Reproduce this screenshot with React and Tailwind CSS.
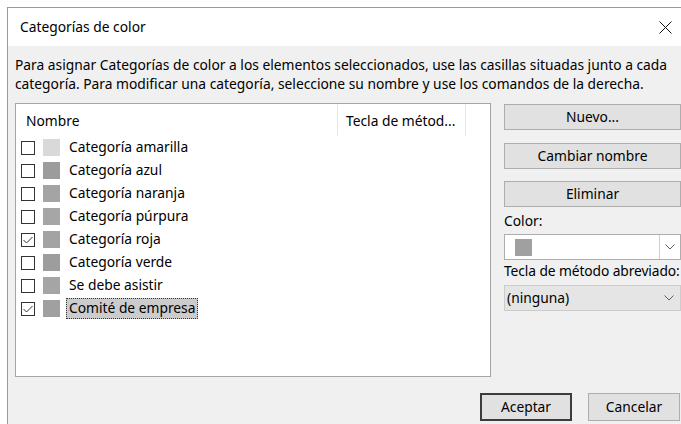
import { useState } from "react"

const categories = [
  { name: "Categoría amarilla", color: "#d9d9d9", checked: false },
  { name: "Categoría azul", color: "#9c9c9c", checked: false },
  { name: "Categoría naranja", color: "#a4a4a4", checked: false },
  { name: "Categoría púrpura", color: "#a6a6a6", checked: false },
  { name: "Categoría roja", color: "#a3a3a3", checked: true },
  { name: "Categoría verde", color: "#9d9d9d", checked: false },
  { name: "Se debe asistir", color: "#a5a5a5", checked: false },
  { name: "Comité de empresa", color: "#a0a0a0", checked: true },
]

const Checkbox = ({ checked, onClick }) => (
  <div
    onClick={onClick}
    className="w-[14px] h-[14px] border border-[#333333] bg-white flex items-center justify-center shrink-0"
  >
    {checked && (
      <svg width="12" height="12" viewBox="0 0 12 12">
        <polyline points="1.5,6 4.5,9 10.5,3" fill="none" stroke="#333333" strokeWidth="1" />
      </svg>
    )}
  </div>
)

const Chevron = () => (
  <svg width="10" height="6" viewBox="0 0 10 6">
    <polyline points="0.5,0.5 5,5 9.5,0.5" fill="none" stroke="#606060" strokeWidth="1" />
  </svg>
)

const WinButton = ({ children, primary, className = "" }) => (
  <button
    className={`h-[26px] bg-[#e1e1e1] text-[13.8px] text-black flex items-center justify-center ${
      primary ? "border-2 border-[#3c3c3c]" : "border border-[#adadad]"
    } ${className}`}
  >
    {children}
  </button>
)

export default function App() {
  const [items, setItems] = useState(categories)
  const [selected, setSelected] = useState(7)

  const toggle = (i) =>
    setItems(items.map((it, idx) => (idx === i ? { ...it, checked: !it.checked } : it)))

  return (
    <div
      className="w-[681px] h-[424px] overflow-hidden bg-white pt-[7px] pl-[7px]"
      style={{ fontFamily: '"Noto Sans", "Open Sans", sans-serif' }}
    >
      <div className="w-[690px] h-[430px] border-l border-t border-[#9a9a9a] bg-[#f0f0f0] flex flex-col">
        {/* title bar */}
        <div className="h-[38px] bg-white flex items-center justify-between pl-[12px] pr-[25px] shrink-0">
          <span className="text-[13.8px] text-black pt-[1px]">Categorías de color</span>
          <svg width="13" height="13" viewBox="0 0 13 13">
            <line x1="0.5" y1="0.5" x2="12.5" y2="12.5" stroke="#111" strokeWidth="1" />
            <line x1="12.5" y1="0.5" x2="0.5" y2="12.5" stroke="#111" strokeWidth="1" />
          </svg>
        </div>

        {/* body */}
        <div className="pl-[7px] pt-[9px]">
          <div className="text-[13.8px] leading-[19px] text-black w-[674px] whitespace-nowrap">
            <div>Para asignar Categorías de color a los elementos seleccionados, use las casillas situadas junto a cada</div>
            <div>categoría. Para modificar una categoría, seleccione su nombre y use los comandos de la derecha.</div>
          </div>

          <div className="flex mt-[10px]">
            {/* category list */}
            <div className="w-[476px] h-[274px] border border-[#a5a5a5] bg-white flex flex-col shrink-0">
              <div className="h-[32px] flex text-[13.8px] text-black shrink-0">
                <div className="w-[322px] border-r border-[#e5e5e5] pl-[10px] pt-[7px]">Nombre</div>
                <div className="w-[128px] border-r border-[#e5e5e5] pl-[8px] pt-[7px] whitespace-nowrap overflow-hidden">
                  Tecla de métod...
                </div>
              </div>
              {items.map((it, i) => (
                <div key={it.name} className="h-[23px] flex items-center pl-[5px] text-[13.8px] text-black">
                  <Checkbox checked={it.checked} onClick={() => toggle(i)} />
                  <div className="w-[17px] h-[17px] ml-[8px] shrink-0" style={{ backgroundColor: it.color }} />
                  <span
                    onClick={() => setSelected(i)}
                    className={`ml-[6px] h-[21px] px-[2px] flex items-center border ${
                      selected === i ? "bg-[#cccccc] border-dotted border-[#333333]" : "border-transparent"
                    }`}
                  >
                    {it.name}
                  </span>
                </div>
              ))}
            </div>

            {/* commands */}
            <div className="ml-[13px] w-[177px] flex flex-col text-[13.8px] text-black">
              <WinButton className="mt-[1px]">Nuevo...</WinButton>
              <WinButton className="mt-[13px]">Cambiar nombre</WinButton>
              <WinButton className="mt-[12px]">Eliminar</WinButton>
              <div className="mt-[5px] leading-[18px]">Color:</div>
              <div className="mt-[4px] h-[26px] bg-white border border-[#adadad] flex items-center">
                <div className="w-[17px] h-[17px] ml-[10px] bg-[#a0a0a0]" />
                <div className="ml-auto h-full w-[21px] border-l border-[#d0d0d0] flex items-center justify-center">
                  <Chevron />
                </div>
              </div>
              <div className="mt-[2px] leading-[18px] whitespace-nowrap tracking-[-0.1px]">Tecla de método abreviado:</div>
              <div className="mt-[5px] h-[26px] bg-[#e5e5e5] border border-[#cccccc] flex items-center pl-[2px] pr-[6px]">
                <span>(ninguna)</span>
                <span className="ml-auto">
                  <Chevron />
                </span>
              </div>
            </div>
          </div>

          {/* footer buttons */}
          <div className="flex mt-[16px] w-[665px] justify-end gap-[16px]">
            <WinButton primary className="w-[92px] h-[28px]">Aceptar</WinButton>
            <WinButton className="w-[92px] h-[28px]">Cancelar</WinButton>
          </div>
        </div>
      </div>
    </div>
  )
}
